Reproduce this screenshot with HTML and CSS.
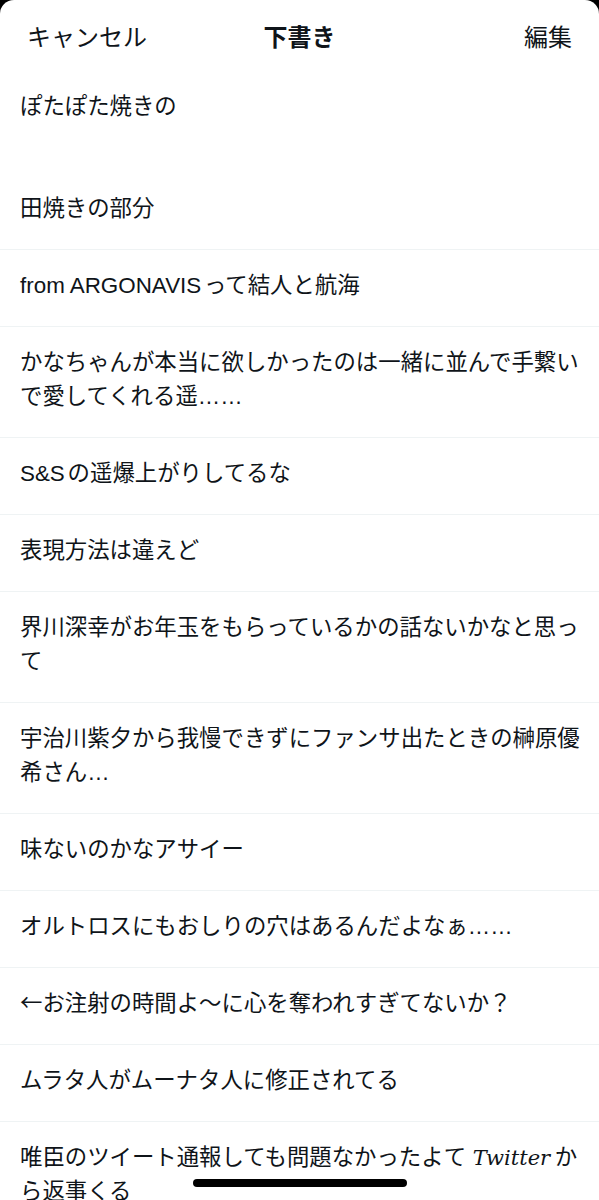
FILE: index.html
```html
<!DOCTYPE html>
<html lang="ja">
<head>
  <meta charset="UTF-8">
  <meta name="viewport" content="width=device-width, initial-scale=1.0">
  <title>下書き</title>
  <link rel="stylesheet" href="styles.css">
</head>
<body>
  <div class="sheet">
    <header class="topbar">
      <span class="topbar-btn">キャンセル</span>
      <h1 class="topbar-title">下書き</h1>
      <span class="topbar-btn topbar-btn-right">編集</span>
    </header>

    <ul class="drafts">
      <li>ぽたぽた焼きの<br><br><br>田焼きの部分</li>
      <li>from ARGONAVISって結人と航海</li>
      <li>かなちゃんが本当に欲しかったのは一緒に並んで手繋いで愛してくれる遥……</li>
      <li>S&amp;Sの遥爆上がりしてるな</li>
      <li>表現方法は違えど</li>
      <li>界川深幸がお年玉をもらっているかの話ないかなと思って</li>
      <li>宇治川紫夕から我慢できずにファンサ出たときの榊原優希さん…</li>
      <li>味ないのかなアサイー</li>
      <li>オルトロスにもおしりの穴はあるんだよなぁ……</li>
      <li><span class="cjk">←</span>お注射の時間よ〜に心を奪われすぎてないか？</li>
      <li>ムラタ人がムーナタ人に修正されてる</li>
      <li>唯臣のツイート通報しても問題なかったよて<i class="latin-italic">Twitter</i>から返事くる</li>
    </ul>

    <div class="home-bar"></div>
  </div>
</body>
</html>
```

FILE: styles.css
```css
body {
  margin: 0;
  padding: 0;
  background: #000;
  font-family: "Liberation Sans", "Noto Sans CJK JP", sans-serif;
  color: #0f1419;
}
.sheet {
  position: relative;
  background: #fff;
  border-radius: 14px 14px 0 0;
  height: 1200px;
  overflow: hidden;
}
.topbar {
  display: grid;
  grid-template-columns: 1fr auto 1fr;
  align-items: center;
  height: 71px;
  padding: 0 27px 0 27px;
  box-sizing: border-box;
  font-family: "Noto Sans CJK JP", sans-serif;
}
.topbar-btn {
  font-size: 24px;
  line-height: 1;
}
.topbar-btn-right {
  justify-self: end;
}
.topbar-title {
  margin: 0;
  font-size: 24px;
  font-weight: 700;
  line-height: 1;
}
.drafts {
  list-style: none;
  margin: 0;
  padding: 0;
}
.drafts li {
  padding: 19px 18px 23px 20px;
  font-size: 22.4px;
  line-height: 34px;
  border-bottom: 1px solid #eff3f4;
  text-autospace: normal;
}
.cjk {
  font-family: "Noto Sans CJK JP", sans-serif;
  line-height: 1;
}
.latin-italic {
  font-family: "DejaVu Serif", serif;
  font-style: italic;
  font-size: 21px;
  margin: 0 2px 0 4px;
}
.home-bar {
  position: absolute;
  left: 193px;
  bottom: 13px;
  width: 214px;
  height: 8px;
  border-radius: 4px;
  background: #000;
}
```
